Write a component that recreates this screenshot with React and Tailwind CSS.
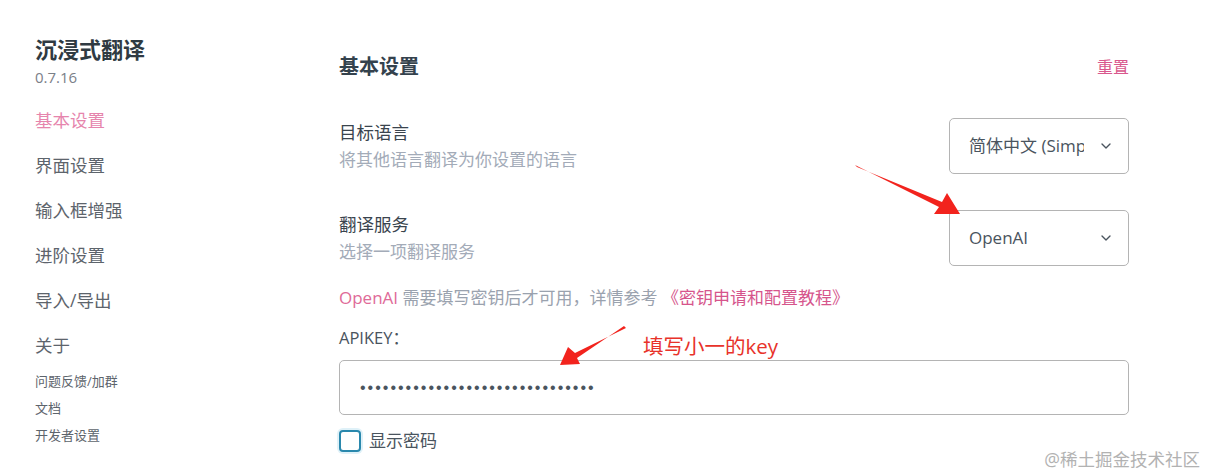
import { ChevronDown } from 'lucide-react';

const font = { fontFamily: '"Open Sans", "Noto Sans CJK SC", sans-serif' };

const navItems = ['基本设置', '界面设置', '输入框增强', '进阶设置', '导入/导出', '关于'];
const smallItems = ['问题反馈/加群', '文档', '开发者设置'];

function SelectBox({ value }) {
  return (
    <div className="w-[180px] h-[56px] border border-[#b4b4b4] rounded-[5px] flex items-center pl-[19px] pr-[14px] bg-white">
      <div className="w-[115px] overflow-hidden whitespace-nowrap text-[17px] text-[#4a545e]">{value}</div>
      <div className="flex-1" />
      <ChevronDown className="w-4 h-4 text-[#4a545e]" strokeWidth={2} />
    </div>
  );
}

function SettingRow({ title, desc, value }) {
  return (
    <div className="flex items-center justify-between h-[56px]">
      <div>
        <div className="text-[17.5px] leading-[28px] text-[#3a444e]">{title}</div>
        <div className="text-[17px] leading-[28px] text-[#a3abb8]">{desc}</div>
      </div>
      <SelectBox value={value} />
    </div>
  );
}

export default function App() {
  return (
    <div className="relative w-[1207px] h-[476px] bg-white overflow-hidden" style={font}>
      <div className="flex">
        {/* Sidebar */}
        <div className="w-[339px] pl-[35px] pt-[34px] flex-shrink-0">
          <div className="text-[22px] leading-[30px] font-bold text-[#2f3a42]">沉浸式翻译</div>
          <div className="mt-[3px] text-[15px] leading-[20px] text-[#7b8088]">0.7.16</div>
          <div className="mt-[10.5px]">
            {navItems.map((item, i) => (
              <div
                key={item}
                className={`h-[45px] flex items-center text-[17.5px] ${i === 0 ? 'text-[#e685ad]' : 'text-[#5d646c]'}`}
              >
                {item}
              </div>
            ))}
          </div>
          <div className="mt-[1px]">
            {smallItems.map((item) => (
              <div key={item} className="h-[27px] flex items-center text-[13px] text-[#5d646c]">
                {item}
              </div>
            ))}
          </div>
        </div>

        {/* Main */}
        <div className="w-[790px] pt-[53px]">
          <div className="flex items-center justify-between h-[28px]">
            <div className="text-[20px] font-bold text-[#34424d]">基本设置</div>
            <div className="text-[16px] text-[#d9578d]">重置</div>
          </div>

          <div className="mt-[37px] flex flex-col gap-[36px]">
            <SettingRow title="目标语言" desc="将其他语言翻译为你设置的语言" value="简体中文 (Simplified Chinese)" />
            <SettingRow title="翻译服务" desc="选择一项翻译服务" value="OpenAI" />
          </div>

          <div className="mt-[20px] text-[17px] leading-[24px] text-[#9aa2ae]">
            <span className="text-[#e06a98]">OpenAI</span> 需要填写密钥后才可用，详情参考{' '}
            <span className="text-[#d6558c]">《密钥申请和配置教程》</span>
          </div>

          <div className="mt-[16px] text-[16.5px] leading-[24px] text-[#4a545e]">APIKEY：</div>

          <div className="mt-[10px] h-[55px] border border-[#b4b4b4] rounded-[5px] flex items-center pl-[20px]">
            <span
              className="text-[16px] tracking-[2px] text-[#4a545e]"
              style={{ fontFamily: '"Liberation Sans", sans-serif' }}
            >
              {'•'.repeat(31)}
            </span>
          </div>

          <div className="mt-[13px] flex items-center gap-[8px]">
            <div className="w-[22px] h-[22px] rounded-[4px] border-2 border-[#2a88ad] ring-2 ring-[#dff1f8] bg-white" />
            <span className="text-[17px] text-[#4a545e]">显示密码</span>
          </div>
        </div>
      </div>

      {/* Annotations */}
      <svg className="absolute inset-0 pointer-events-none" width="1207" height="476">
        <polygon points="855,165 857,167 942,202 947,193 960,214 934,214 939,207" fill="#f2231d" />
        <polygon points="624,326 626,328 575,353 568,347 560,365 580,364 577,358" fill="#f2231d" />
      </svg>
      <div className="absolute left-[643px] top-[333px] text-[20.5px] leading-[26px] text-[#e8322a]">填写小一的key</div>
      <div className="absolute right-[7px] bottom-[4px] text-[17.5px] text-[#b2b2b2]">@稀土掘金技术社区</div>
    </div>
  );
}
